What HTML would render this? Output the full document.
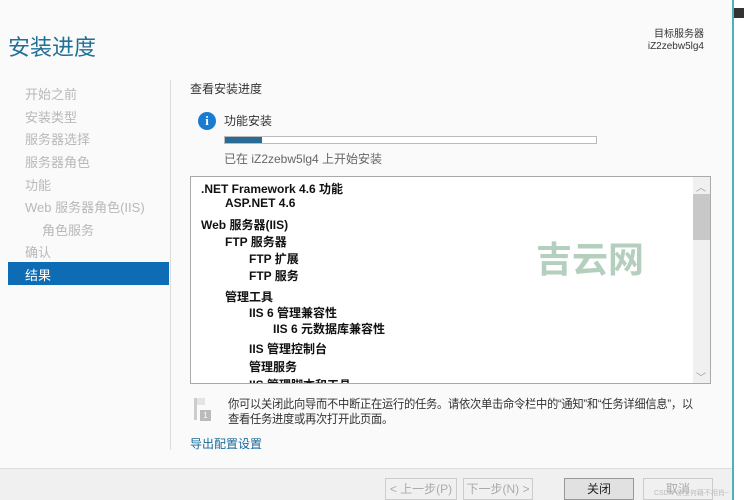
<!DOCTYPE html>
<html><head><meta charset="utf-8"><style>
*{margin:0;padding:0;box-sizing:border-box}
body{width:744px;height:500px;overflow:hidden;background:#fafafa;font-family:"Liberation Sans","Noto Sans CJK SC",sans-serif;position:relative;color:#222}
.a{position:absolute;white-space:nowrap}
.nav{font-size:13px;color:#b8b8b8}
.t{font-size:12px;font-weight:bold;color:#111}
</style></head><body>
<div class="a" style="left:8px;top:30px;font-size:22px;color:#1f6f96">安装进度</div>
<div class="a" style="right:40px;top:29px;font-size:10px;color:#333;text-align:right;line-height:12px">目标服务器<br>iZ2zebw5lg4</div>
<div class="a" style="left:732px;top:0;width:2px;height:500px;background:#4fb0b8"></div>
<div class="a" style="left:734px;top:0;width:10px;height:500px;background:#fff"></div>
<div class="a" style="left:734px;top:8px;width:10px;height:10px;background:#333"></div>
<div class="a" style="left:170px;top:80px;width:1px;height:370px;background:#ddd"></div>
<div class="a nav" style="left:25px;top:84px">开始之前</div>
<div class="a nav" style="left:25px;top:107px">安装类型</div>
<div class="a nav" style="left:25px;top:129px">服务器选择</div>
<div class="a nav" style="left:25px;top:152px">服务器角色</div>
<div class="a nav" style="left:25px;top:175px">功能</div>
<div class="a nav" style="left:25px;top:197px">Web 服务器角色(IIS)</div>
<div class="a nav" style="left:42px;top:220px">角色服务</div>
<div class="a nav" style="left:25px;top:242px">确认</div>
<div class="a" style="left:8px;top:262px;width:161px;height:23px;background:#0e6cb4"></div>
<div class="a" style="left:25px;top:265px;font-size:13px;color:#fff">结果</div>
<div class="a" style="left:190px;top:80px;font-size:12px;color:#333">查看安装进度</div>
<div class="a" style="left:198px;top:112px;width:18px;height:18px;border-radius:50%;background:#1a7cd0;color:#fff;font-weight:bold;font-size:13px;text-align:center;line-height:18px;font-family:'Liberation Serif',serif">i</div>
<div class="a" style="left:224px;top:112px;font-size:12px;color:#333">功能安装</div>
<div class="a" style="left:224px;top:136px;width:373px;height:8px;border:1px solid #bbb;background:#fff"></div>
<div class="a" style="left:225px;top:137px;width:37px;height:6px;background:#2a6b95"></div>
<div class="a" style="left:224px;top:150px;font-size:12px;color:#666">已在 iZ2zebw5lg4 上开始安装</div>
<div class="a" style="left:190px;top:176px;width:521px;height:208px;border:1px solid #aaa;background:#fff;overflow:hidden">
 <div class="a" style="right:0;top:0;width:17px;height:206px;background:#f0f0f0"></div>
 <div class="a" style="right:0;top:17px;width:17px;height:46px;background:#c8c8c8"></div>
 <div class="a" style="right:4px;top:2px;font-size:10px;color:#999">︿</div>
 <div class="a" style="right:4px;top:192px;font-size:10px;color:#999">﹀</div>
 <div class="a t" style="left:10px;top:3px">.NET Framework 4.6 功能</div>
 <div class="a t" style="left:34px;top:19px">ASP.NET 4.6</div>
 <div class="a t" style="left:10px;top:39px">Web 服务器(IIS)</div>
 <div class="a t" style="left:34px;top:56px">FTP 服务器</div>
 <div class="a t" style="left:58px;top:73px">FTP 扩展</div>
 <div class="a t" style="left:58px;top:90px">FTP 服务</div>
 <div class="a t" style="left:34px;top:111px">管理工具</div>
 <div class="a t" style="left:58px;top:127px">IIS 6 管理兼容性</div>
 <div class="a t" style="left:82px;top:143px">IIS 6 元数据库兼容性</div>
 <div class="a t" style="left:58px;top:163px">IIS 管理控制台</div>
 <div class="a t" style="left:58px;top:181px">管理服务</div>
 <div class="a t" style="left:58px;top:199px">IIS 管理脚本和工具</div>
 <div class="a" style="left:345px;top:54px;font-size:36px;font-weight:bold;color:#b5cfbf;letter-spacing:0px">吉云网</div>
</div>
<div class="a" style="left:194px;top:398px;width:3px;height:22px;background:#ccc"></div>
<div class="a" style="left:197px;top:398px;width:8px;height:7px;background:#e4e4e4"></div>
<div class="a" style="left:200px;top:410px;width:11px;height:11px;background:#bbb;color:#fff;font-size:8px;text-align:center;line-height:11px">1</div>
<div class="a" style="left:228px;top:397px;font-size:12px;color:#333;line-height:15px;letter-spacing:-0.3px;transform:scale(0.94,1);transform-origin:0 0">你可以关闭此向导而不中断正在运行的任务。请依次单击命令栏中的“通知”和“任务详细信息”，以<br>查看任务进度或再次打开此页面。</div>
<div class="a" style="left:190px;top:435px;font-size:12px;color:#1a6a9a">导出配置设置</div>
<div class="a" style="left:0;top:468px;width:732px;height:32px;background:#f0f0f0;border-top:1px solid #ddd"></div>
<div class="a" style="left:385px;top:478px;width:72px;height:22px;border:1px solid #ccc;font-size:12px;color:#aaa;text-align:center;line-height:20px">&lt; 上一步(P)</div>
<div class="a" style="left:463px;top:478px;width:70px;height:22px;border:1px solid #ccc;font-size:12px;color:#aaa;text-align:center;line-height:20px">下一步(N) &gt;</div>
<div class="a" style="left:564px;top:478px;width:70px;height:22px;border:1px solid #999;background:#e1e1e1;font-size:12px;color:#222;text-align:center;line-height:20px">关闭</div>
<div class="a" style="left:643px;top:478px;width:70px;height:22px;border:1px solid #ccc;font-size:12px;color:#aaa;text-align:center;line-height:20px">取消</div>
<div class="a" style="left:654px;top:488px;font-size:7px;color:#bbb">CSDN @生何藉不相肖~</div>
</body></html>
